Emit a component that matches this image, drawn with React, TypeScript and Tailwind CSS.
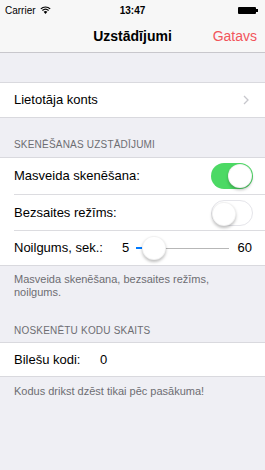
import React from 'react';

const font = { fontFamily: '"Liberation Sans", Arial, sans-serif' };

const Switch: React.FC<{ on: boolean }> = ({ on }) => (
    <div className={`relative w-[42px] h-[26px] rounded-full ${on ? 'bg-[#4cd964]' : 'bg-white border border-[#e5e5ea]'}`}>
        <div className={`absolute top-[1px] ${on ? 'right-[1px]' : 'left-0'} w-[24px] h-[24px] rounded-full bg-white shadow-[0_2px_3px_rgba(0,0,0,0.25)] border border-black/5`} />
    </div>
);

const App: React.FC = () => {
    return (
        <div className="w-[265px] h-[470px] bg-[#efeff4] overflow-hidden text-black" style={font}>
            {/* status bar */}
            <div className="h-[20px] bg-[#f7f7f7] flex items-center justify-between px-[5px] text-[10px]">
                <div className="flex items-center gap-[4px] w-[70px]">
                    <span>Carrier</span>
                    <svg width="11" height="8" viewBox="0 0 11 8">
                        <path d="M5.5 8 L3.6 5.8 A2.8 2.8 0 0 1 7.4 5.8 Z" fill="#000" />
                        <path d="M2.4 4.5 A4.6 4.6 0 0 1 8.6 4.5" stroke="#000" strokeWidth="1.2" fill="none" />
                        <path d="M0.8 2.9 A6.8 6.8 0 0 1 10.2 2.9" stroke="#000" strokeWidth="1.2" fill="none" />
                    </svg>
                </div>
                <span className="font-bold text-[10px]">13:47</span>
                <div className="w-[70px] flex justify-end pr-[2px]">
                    <div className="flex items-center">
                        <div className="w-[18px] h-[7px] bg-black rounded-[1px]" />
                        <div className="w-[1.5px] h-[3px] bg-black" />
                    </div>
                </div>
            </div>
            {/* nav bar */}
            <div className="h-[33px] bg-[#f7f7f7] border-b border-[#c8c7cc] relative flex items-center justify-center">
                <span className="text-[14px] font-bold">Uzstādījumi</span>
                <span className="absolute right-[8px] text-[14px] text-[#f2545b]">Gatavs</span>
            </div>

            <div className="h-[29px]" />
            <div className="bg-white border-y border-[#d9d9de] h-[36px] flex items-center justify-between pl-[14px] pr-[16px]">
                <span className="text-[13px]">Lietotāja konts</span>
                <svg width="6" height="10" viewBox="0 0 6 10">
                    <path d="M1 1 L5 5 L1 9" stroke="#c7c7cc" strokeWidth="1.3" fill="none" />
                </svg>
            </div>

            <div className="h-[39px] flex items-end pb-[6px] pl-[14px] text-[10px] leading-[12px] text-[#6d6d72] tracking-[0.2px]">SKENĒŠANAS UZSTĀDĪJUMI</div>
            <div className="bg-white border-y border-[#d9d9de]">
                <div className="h-[36px] flex items-center justify-between pl-[14px] pr-[12px]">
                    <span className="text-[13px]">Masveida skenēšana:</span>
                    <Switch on />
                </div>
                <div className="ml-[14px] h-px bg-[#dcdce0]" />
                <div className="h-[35px] flex items-center justify-between pl-[14px] pr-[12px]">
                    <span className="text-[13px]">Bezsaites režīms:</span>
                    <Switch on={false} />
                </div>
                <div className="ml-[14px] h-px bg-[#dcdce0]" />
                <div className="h-[34px] flex items-center pl-[14px] pr-[13px]">
                    <span className="text-[13px] w-[108px]">Noilgums, sek.:</span>
                    <span className="text-[13px] w-[14px]">5</span>
                    <div className="relative flex-1 h-[24px] flex items-center mr-[9px]">
                        <div className="w-full h-[1px] bg-[#b7b7b7]" />
                        <div className="absolute left-0 w-[8px] h-[2px] bg-[#007aff]" />
                        <div className="absolute left-[6px] w-[24px] h-[24px] rounded-full bg-white shadow-[0_2px_3px_rgba(0,0,0,0.25)] border border-black/5" />
                    </div>
                    <span className="text-[13px]">60</span>
                </div>
            </div>
            <div className="pt-[7px] px-[14px] text-[11px] leading-[13px] text-[#6d6d72]">
                Masveida skenēšana, bezsaites režīms,<br />noilgums.
            </div>

            <div className="h-[43px] flex items-end pb-[5px] pl-[14px] text-[10px] leading-[12px] text-[#6d6d72] tracking-[0.2px]">NOSKENĒTU KODU SKAITS</div>
            <div className="bg-white border-y border-[#d9d9de] h-[35px] flex items-center pl-[14px]">
                <span className="text-[13px] w-[86px]">Bilešu kodi:</span>
                <span className="text-[13px]">0</span>
            </div>
            <div className="pt-[8px] pl-[14px] text-[11px] leading-[13px] text-[#6d6d72]">Kodus drikst dzēst tikai pēc pasākuma!</div>
        </div>
    );
};

export default App;
